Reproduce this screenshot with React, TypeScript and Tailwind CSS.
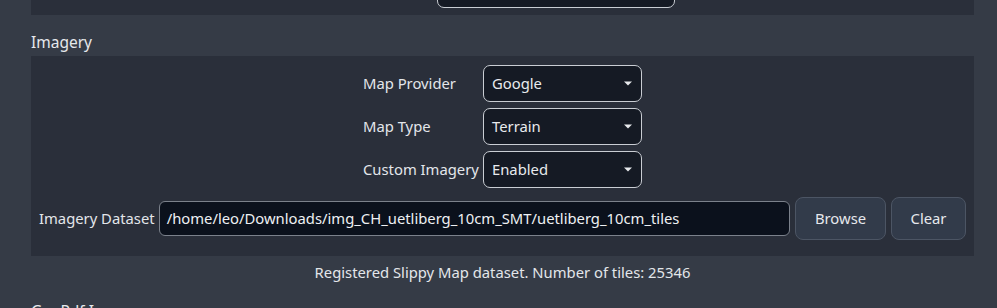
import React from 'react';

const font = { fontFamily: '"Noto Sans", "Open Sans", sans-serif' };

const Select: React.FC<{ value: string; className?: string }> = ({ value, className = 'w-[159px]' }) => (
    <div className={`${className} h-[37px] flex items-center justify-between pl-2 pr-[9px] bg-[#151a24] border border-[#c9cdd3] rounded-[7px] text-[14.8px] text-[#e8eaed]`}>
        <span>{value}</span>
        <svg width="8" height="5" viewBox="0 0 8 5">
            <path d="M0 0.5 H8 L4 4.5 Z" fill="#e8eaed" />
        </svg>
    </div>
);

const FormRow: React.FC<{ label: string; value: string }> = ({ label, value }) => (
    <div className="flex items-center">
        <div className="w-[120px] whitespace-nowrap text-[14.8px] text-[#e3e6ea]">{label}</div>
        <Select value={value} />
    </div>
);

const App: React.FC = () => {
    return (
        <div className="w-[997px] h-[308px] overflow-hidden bg-[#353b46]" style={font}>
            {/* previous section tail */}
            <div className="ml-[31px] w-[943px] h-[15px] bg-[#2a2f3a] overflow-hidden flex flex-col justify-end">
                <div className="flex items-center pb-[7px] pl-[406px]">
                    <Select value="" className="w-[238px]" />
                </div>
            </div>

            {/* Imagery header */}
            <div className="h-[41px] pl-[31px] pt-[17px] text-[15.5px] leading-[20px] text-[#e6e8ec]">Imagery</div>

            {/* Imagery panel */}
            <div className="ml-[31px] w-[943px] bg-[#2a2f3a] pt-[9px] pb-[16px] px-2">
                <div className="flex flex-col items-center gap-[6px]">
                    <FormRow label="Map Provider" value="Google" />
                    <FormRow label="Map Type" value="Terrain" />
                    <FormRow label="Custom Imagery" value="Enabled" />
                </div>
                <div className="flex items-center mt-[9px]">
                    <div className="shrink-0 whitespace-nowrap text-[14.8px] text-[#e3e6ea] mr-[4px]">Imagery Dataset</div>
                    <div className="flex-1 min-w-0 h-[35px] flex items-center pl-[7px] bg-[#0b111c] border border-[#7b818b] rounded-[6px] text-[14.8px] text-[#eef0f3] whitespace-nowrap overflow-hidden">
                        /home/leo/Downloads/img_CH_uetliberg_10cm_SMT/uetliberg_10cm_tiles
                    </div>
                    <button className="shrink-0 ml-[5px] w-[91px] h-[43px] bg-[#323b4a] border border-[#4c5564] rounded-[8px] text-[14.8px] text-[#e6e8ec]">
                        Browse
                    </button>
                    <button className="shrink-0 ml-[5px] w-[75px] h-[43px] bg-[#323b4a] border border-[#4c5564] rounded-[8px] text-[14.8px] text-[#e6e8ec]">
                        Clear
                    </button>
                </div>
            </div>

            {/* status */}
            <div className="ml-[31px] w-[943px] pt-[6px] text-center text-[14.8px] leading-[20px] text-[#e3e6ea]">
                Registered Slippy Map dataset. Number of tiles: 25346
            </div>

            {/* next header */}
            <div className="pl-[31px] pt-[19px] text-[15.5px] leading-[20px] text-[#e6e8ec]">GeoPdf Imagery</div>
        </div>
    );
};

export default App;
